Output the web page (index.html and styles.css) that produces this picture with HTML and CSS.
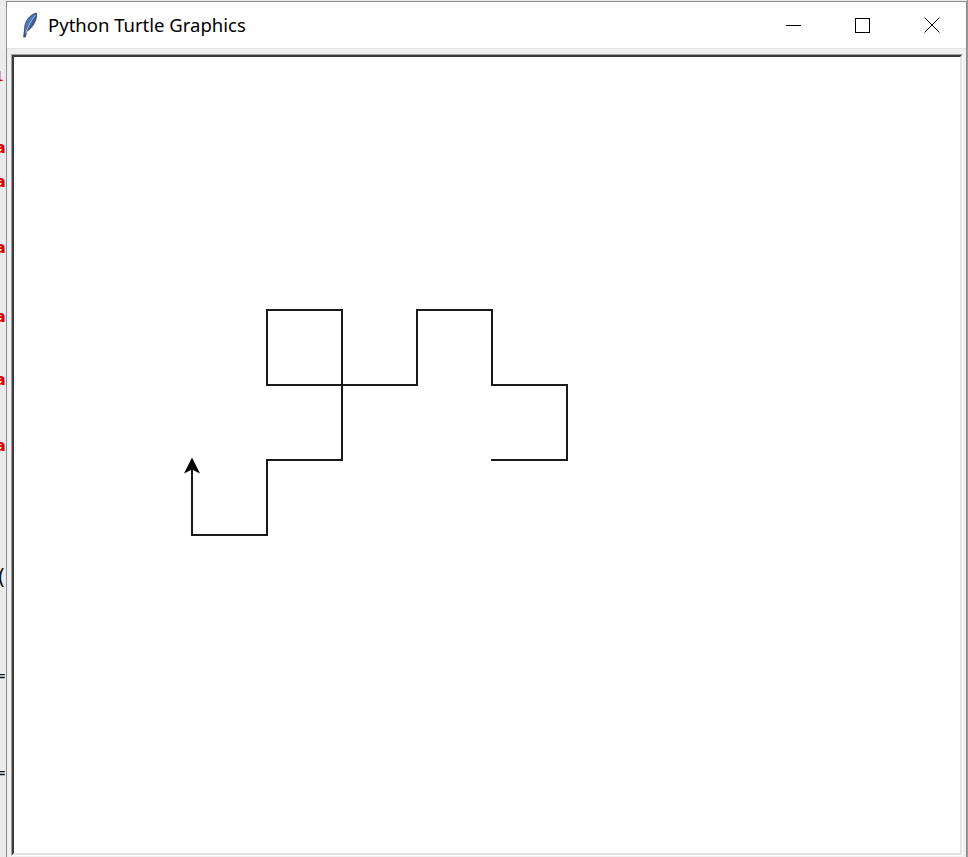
FILE: index.html
```
<!DOCTYPE html>
<html>
<head>
<meta charset="utf-8">
<link rel="stylesheet" href="styles.css">
</head>
<body>
<div class="desk">
  <span class="frag red f1">1</span>
  <span class="frag red f2">a</span>
  <span class="frag red f3">a</span>
  <span class="frag red f4">a</span>
  <span class="frag red f5">a</span>
  <span class="frag red f6">a</span>
  <span class="frag red f7">/</span>
  <span class="frag red f8">a</span>
  <span class="frag dark f9">(</span>
  <span class="frag dark f10">=</span>
  <span class="frag dark f11">=</span>
</div>
<div class="window">
  <div class="titlebar">
    <svg class="app-icon" width="17" height="26" viewBox="0 0 17 26">
      <defs>
        <linearGradient id="fg" x1="0" y1="0" x2="1" y2="1">
          <stop offset="0" stop-color="#86a8de"/>
          <stop offset="0.5" stop-color="#3f66a8"/>
          <stop offset="1" stop-color="#1d2f55"/>
        </linearGradient>
      </defs>
      <path d="M15.5 1 C9 2.5 3.5 9 3.6 17 L2.6 25 L4.4 25 L5.6 19.5 C11.5 16 16.5 8 15.5 1 Z" fill="url(#fg)" stroke="#1b2a48" stroke-width="0.7"/>
      <path d="M14.5 3 C10.5 8 7 13.5 4.8 21" fill="none" stroke="#d4e0f4" stroke-width="0.7"/>
    </svg>
    <span class="title">Python Turtle Graphics</span>
    <div class="controls">
      <div class="ctl">
        <svg width="15" height="15" viewBox="0 0 15 15"><path d="M0 7.5 H15" stroke="#000" stroke-width="1"/></svg>
      </div>
      <div class="ctl">
        <svg width="15" height="15" viewBox="0 0 15 15"><rect x="0.5" y="0.5" width="14" height="14" fill="none" stroke="#000" stroke-width="1"/></svg>
      </div>
      <div class="ctl">
        <svg width="16" height="16" viewBox="0 0 16 16"><path d="M0.5 0.5 L15.5 15.5 M15.5 0.5 L0.5 15.5" stroke="#000" stroke-width="1"/></svg>
      </div>
    </div>
  </div>
  <div class="content">
    <div class="frame-outer">
      <div class="frame-inner">
        <div class="canvas">
          <svg class="drawing" width="946" height="796" viewBox="14 56 946 796">
            <g fill="none" stroke="#1a1a1a" stroke-width="2" stroke-linejoin="miter" stroke-linecap="square">
              <path d="M267 309 H342 V384 H267 Z"/>
              <path d="M342 384 H417 V309 H492 V384 H567 V459 H492"/>
              <path d="M342 384 V459 H267 V534 H192 V464"/>
            </g>
            <polygon points="192,456.5 200,472.5 192,468.5 184,472.5" fill="#000"/>
          </svg>
        </div>
      </div>
    </div>
  </div>
</div>
<div class="desk-right"></div>
</body>
</html>
```
FILE: styles.css
```
html, body {
  margin: 0;
  padding: 0;
}
body {
  width: 968px;
  height: 857px;
  overflow: hidden;
  background: #e9e9e9;
  display: flex;
  align-items: flex-start;
  font-family: "Noto Sans", "Open Sans", sans-serif;
}
.desk {
  position: relative;
  width: 6px;
  height: 857px;
  flex: none;
  overflow: hidden;
  background: #ececec;
}
.frag {
  position: absolute;
  left: -5px;
  font-family: "DejaVu Sans", sans-serif;
  font-weight: bold;
  font-size: 16px;
  line-height: 16px;
}
.red { color: #e00000; }
.dark { color: #111; }
.f1 { top: 68px; left: -5px; font-size: 14px; font-weight: normal; }
.f2 { top: 140px; }
.f3 { top: 174px; }
.f4 { top: 240px; }
.f5 { top: 309px; }
.f6 { top: 372px; }
.f7 { top: 398px; left: -7px; font-weight: normal; }
.f8 { top: 438px; }
.f9 { top: 566px; font-size: 22px; line-height: 22px; left: -3px; font-weight: normal; }
.f10 { top: 668px; font-size: 12px; left: -4px; }
.f11 { top: 765px; font-size: 12px; left: -4px; }

.window {
  flex: none;
  width: 959px;
  margin-top: 1px;
  border: 1px solid #8d8d8d;
  border-bottom: none;
  background: #f0f0f0;
}
.titlebar {
  height: 46px;
  background: #ffffff;
  display: flex;
  align-items: center;
}
.app-icon {
  margin-left: 14px;
  margin-right: 10px;
  flex: none;
}
.title {
  font-size: 18.5px;
  color: #000;
  padding-bottom: 1px;
}
.controls {
  margin-left: auto;
  display: flex;
  height: 46px;
}
.ctl {
  width: 69px;
  height: 46px;
  display: flex;
  align-items: center;
  justify-content: center;
}
.ctl svg { display: block; }

.content {
  background: #f0f0f0;
  padding: 5px 3px 0 4px;
  height: 809px;
  box-sizing: border-box;
  border-top: 1px solid #e2e2e2;
}
.frame-outer {
  border: 1px solid;
  border-color: #a0a0a0 #ffffff #ffffff #a0a0a0;
}
.frame-inner {
  border: 2px solid;
  border-color: #3a3a3a #e3e3e3 #e3e3e3 #3a3a3a;
}
.canvas {
  width: 946px;
  height: 796px;
  background: #ffffff;
  overflow: hidden;
}
.drawing { display: block; }
.desk-right {
  flex: 1;
  height: 857px;
  background: #9a9a9a;
}
```
